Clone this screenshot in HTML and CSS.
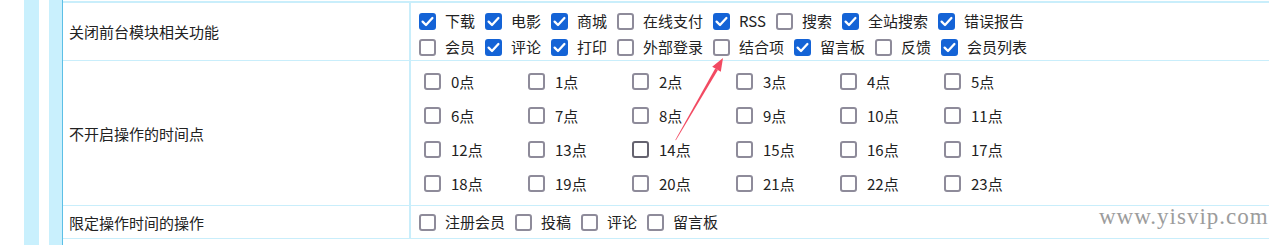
FILE: index.html
```html
<!DOCTYPE html>
<html lang="zh-CN">
<head>
<meta charset="utf-8">
<link rel="stylesheet" href="styles.css">
</head>
<body>
<div class="page">
  <div class="strip-outer"></div>
  <div class="strip-inner"></div>
  <div class="table">
    <div class="row row-modules">
      <div class="label">关闭前台模块相关功能</div>
      <div class="value modules">
        <div class="line">
          <span class="item"><span class="box on"><svg viewBox="0 0 17 17"><polyline points="3.6,8.6 7,12 13.4,5"/></svg></span>下载</span>
          <span class="item"><span class="box on"><svg viewBox="0 0 17 17"><polyline points="3.6,8.6 7,12 13.4,5"/></svg></span>电影</span>
          <span class="item"><span class="box on"><svg viewBox="0 0 17 17"><polyline points="3.6,8.6 7,12 13.4,5"/></svg></span>商城</span>
          <span class="item"><span class="box"></span>在线支付</span>
          <span class="item"><span class="box on"><svg viewBox="0 0 17 17"><polyline points="3.6,8.6 7,12 13.4,5"/></svg></span>RSS</span>
          <span class="item"><span class="box"></span>搜索</span>
          <span class="item"><span class="box on"><svg viewBox="0 0 17 17"><polyline points="3.6,8.6 7,12 13.4,5"/></svg></span>全站搜索</span>
          <span class="item"><span class="box on"><svg viewBox="0 0 17 17"><polyline points="3.6,8.6 7,12 13.4,5"/></svg></span>错误报告</span>
        </div>
        <div class="line">
          <span class="item"><span class="box"></span>会员</span>
          <span class="item"><span class="box on"><svg viewBox="0 0 17 17"><polyline points="3.6,8.6 7,12 13.4,5"/></svg></span>评论</span>
          <span class="item"><span class="box on"><svg viewBox="0 0 17 17"><polyline points="3.6,8.6 7,12 13.4,5"/></svg></span>打印</span>
          <span class="item"><span class="box"></span>外部登录</span>
          <span class="item"><span class="box"></span>结合项</span>
          <span class="item"><span class="box on"><svg viewBox="0 0 17 17"><polyline points="3.6,8.6 7,12 13.4,5"/></svg></span>留言板</span>
          <span class="item"><span class="box"></span>反馈</span>
          <span class="item"><span class="box on"><svg viewBox="0 0 17 17"><polyline points="3.6,8.6 7,12 13.4,5"/></svg></span>会员列表</span>
        </div>
      </div>
    </div>
    <div class="row row-hours">
      <div class="label">不开启操作的时间点</div>
      <div class="value hours">
        <span class="hour"><span class="box"></span>0点</span>
        <span class="hour"><span class="box"></span>1点</span>
        <span class="hour"><span class="box"></span>2点</span>
        <span class="hour"><span class="box"></span>3点</span>
        <span class="hour"><span class="box"></span>4点</span>
        <span class="hour"><span class="box"></span>5点</span>
        <span class="hour"><span class="box"></span>6点</span>
        <span class="hour"><span class="box"></span>7点</span>
        <span class="hour"><span class="box"></span>8点</span>
        <span class="hour"><span class="box"></span>9点</span>
        <span class="hour"><span class="box"></span>10点</span>
        <span class="hour"><span class="box"></span>11点</span>
        <span class="hour"><span class="box"></span>12点</span>
        <span class="hour"><span class="box"></span>13点</span>
        <span class="hour"><span class="box hover"></span>14点</span>
        <span class="hour"><span class="box"></span>15点</span>
        <span class="hour"><span class="box"></span>16点</span>
        <span class="hour"><span class="box"></span>17点</span>
        <span class="hour"><span class="box"></span>18点</span>
        <span class="hour"><span class="box"></span>19点</span>
        <span class="hour"><span class="box"></span>20点</span>
        <span class="hour"><span class="box"></span>21点</span>
        <span class="hour"><span class="box"></span>22点</span>
        <span class="hour"><span class="box"></span>23点</span>
      </div>
    </div>
    <div class="row row-limit">
      <div class="label">限定操作时间的操作</div>
      <div class="value limit">
        <span class="item"><span class="box"></span>注册会员</span>
        <span class="item"><span class="box"></span>投稿</span>
        <span class="item"><span class="box"></span>评论</span>
        <span class="item"><span class="box"></span>留言板</span>
      </div>
    </div>
  </div>
</div>
<svg class="arrow" width="1269" height="245" viewBox="0 0 1269 245">
  <polygon points="675.3,140 715.2,68.4 717.9,69.9 675.9,140.3"/>
  <polygon points="723,58 712.2,66.7 720.8,71.7"/>
</svg>
<div class="watermark">www.yisvip.com</div>
</body>
</html>
```

FILE: styles.css
```css
html, body {
  margin: 0;
  padding: 0;
  background: #ffffff;
}
body {
  width: 1269px;
  height: 245px;
  overflow: hidden;
  position: relative;
  font-family: "Noto Sans CJK SC", "Noto Sans", sans-serif;
  font-size: 15px;
  color: #222222;
}
.page {
  display: flex;
  height: 245px;
}
.strip-outer {
  width: 15px;
  margin-left: 24px;
  background: #c9f0fd;
}
.strip-inner {
  width: 13px;
  margin-left: 10px;
  background: #c9f0fd;
  border-right: 1px solid #5cbfe6;
}
.table {
  flex: 1;
  margin-top: 1px;
  border-top: 2px solid #c9eefb;
}
.row {
  display: flex;
  border-bottom: 1px solid #c9eefb;
}
.label {
  width: 340px;
  padding-left: 6px;
  border-right: 2px solid #c9eefb;
  display: flex;
  align-items: center;
  white-space: nowrap;
}
.value {
  flex: 1;
}
.row-modules { height: 57px; }
.row-hours { height: 144px; }
.row-limit { height: 32px; }

.modules {
  padding: 5px 0 0 8px;
}
.line {
  display: flex;
  height: 26px;
  align-items: center;
}
.item {
  display: inline-flex;
  align-items: center;
  margin-right: 10px;
  white-space: nowrap;
  line-height: 20px;
}
.box {
  box-sizing: border-box;
  width: 17px;
  height: 17px;
  border: 2px solid #8e8b9a;
  border-radius: 3px;
  background: #ffffff;
  margin-right: 9px;
  flex: none;
  display: inline-block;
}
.hour .box {
  margin-right: 10px;
}
.box.hover {
  border-color: #65636f;
}
.box.on {
  background: #1463d6;
  border-color: #1463d6;
  position: relative;
}
.box.on svg {
  position: absolute;
  left: -2px;
  top: -2px;
  width: 17px;
  height: 17px;
}
.box.on polyline {
  fill: none;
  stroke: #ffffff;
  stroke-width: 2.3;
  stroke-linecap: round;
  stroke-linejoin: round;
}
.hours {
  display: grid;
  grid-template-columns: repeat(6, 104px);
  grid-auto-rows: 34px;
  padding: 3px 0 0 13px;
  align-content: start;
}
.hour {
  display: flex;
  align-items: center;
  white-space: nowrap;
}
.limit {
  display: flex;
  align-items: center;
  padding-left: 8px;
}
.arrow {
  position: absolute;
  left: 0;
  top: 0;
  pointer-events: none;
}
.arrow polygon {
  fill: #f24a62;
}
.watermark {
  position: absolute;
  left: 1099px;
  top: 204px;
  font-family: "Liberation Serif", "DejaVu Serif", serif;
  font-size: 23px;
  letter-spacing: 1px;
  color: #9c9c9c;
  line-height: 26px;
}
```
